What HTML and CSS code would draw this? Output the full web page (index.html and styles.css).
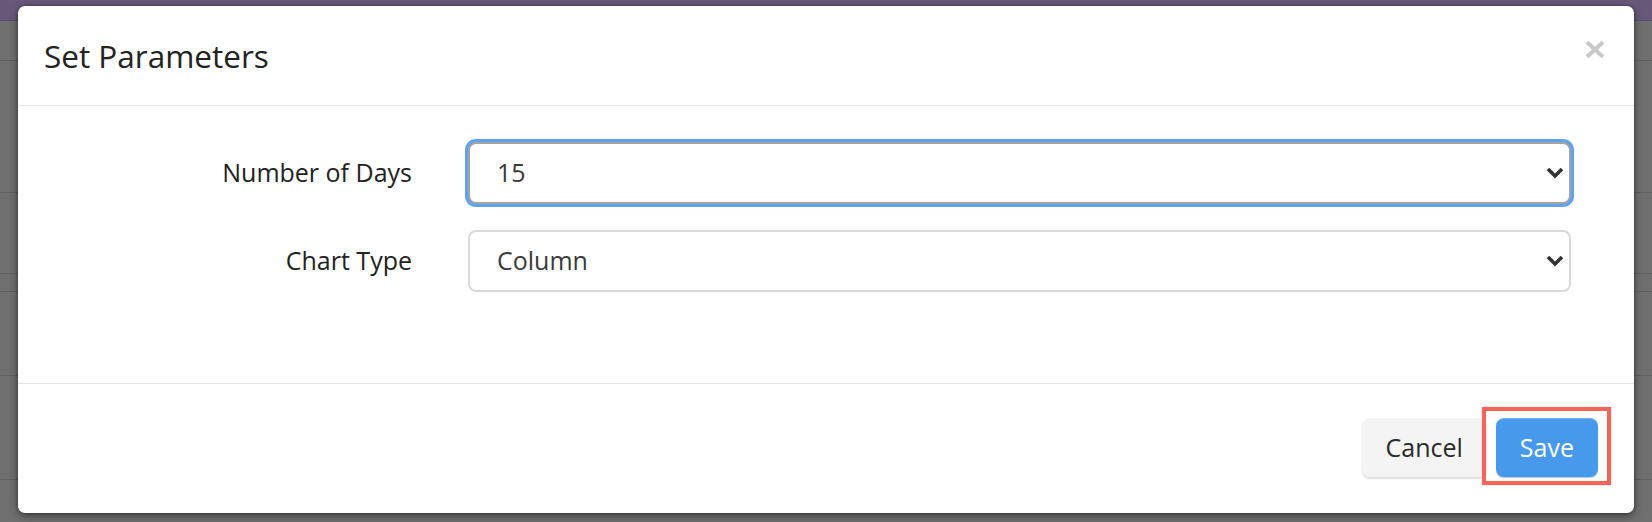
FILE: index.html
```html
<!DOCTYPE html>
<html lang="en">
<head>
<meta charset="utf-8">
<title>Set Parameters</title>
<link rel="stylesheet" href="styles.css">
</head>
<body>
<div class="page">
  <div class="topbar"></div>
  <div class="band b1"></div>
  <div class="band b2"></div>
  <div class="band b3"></div>
  <div class="band b4"></div>
  <div class="band b5"></div>
  <div class="band b6"></div>
</div>

<div class="modal">
  <div class="modal-header">
    <h4 class="modal-title">Set Parameters</h4>
    <button class="close" type="button" aria-label="Close">
      <svg width="18" height="17" viewBox="0 0 18 17"><path d="M2.5 2.5 L15.5 14.5 M15.5 2.5 L2.5 14.5" stroke="#c9c9c9" stroke-width="4" stroke-linecap="square" fill="none"/></svg>
    </button>
  </div>
  <div class="modal-body">
    <div class="form-row">
      <label class="form-label" for="days">Number of Days</label>
      <div class="select-wrap">
        <select id="days" class="form-select focused"><option>15</option></select>
        <svg class="chevron" width="18" height="12" viewBox="0 0 18 12"><path d="M2 2 L9 9 L16 2" stroke="#333" stroke-width="3.6" fill="none"/></svg>
      </div>
    </div>
    <div class="form-row">
      <label class="form-label" for="chart">Chart Type</label>
      <div class="select-wrap">
        <select id="chart" class="form-select"><option>Column</option></select>
        <svg class="chevron" width="18" height="12" viewBox="0 0 18 12"><path d="M2 2 L9 9 L16 2" stroke="#333" stroke-width="3.6" fill="none"/></svg>
      </div>
    </div>
  </div>
  <div class="modal-footer">
    <button class="btn btn-default" type="button">Cancel</button>
    <div class="save-wrap">
      <button class="btn btn-primary" type="button">Save</button>
      <span class="highlight"></span>
    </div>
  </div>
</div>
</body>
</html>
```

FILE: styles.css
```css
* { box-sizing: border-box; }

html, body {
  margin: 0;
  padding: 0;
}

body {
  width: 1652px;
  height: 522px;
  overflow: hidden;
  position: relative;
  background: #6f6f6f;
  font-family: "Open Sans", "Liberation Sans", sans-serif;
}

/* backdrop page */
.page {
  display: flex;
  flex-direction: column;
}
.topbar {
  height: 21px;
  background: #675879;
  border-bottom: 1px solid #5a4c6b;
}
.band {
  border-bottom: 1px solid #606060;
}
.b1 { height: 40px; }
.b2 { height: 132px; }
.b3 { height: 81px; }
.b4 { height: 18px; }
.b5 { height: 84px; }
.b6 { height: 104px; }

/* modal */
.modal {
  position: absolute;
  left: 18px;
  top: 6px;
  width: 1616px;
  height: 507px;
  background: #fff;
  border-radius: 7px;
  box-shadow: 0 3px 9px rgba(0, 0, 0, 0.45), 0 0 3px rgba(0, 0, 0, 0.35);
  display: flex;
  flex-direction: column;
}

.modal-header {
  display: flex;
  justify-content: space-between;
  align-items: flex-start;
  padding: 28px 30px 28px 26px;
  border-bottom: 1px solid #e5e5e5;
}

.modal-title {
  margin: 0;
  font-size: 31.5px;
  line-height: 43px;
  font-weight: 400;
  color: #222;
}

.close {
  margin-top: 7px;
  padding: 0;
  border: 0;
  background: transparent;
  width: 18px;
  height: 17px;
  display: block;
}
.close svg { display: block; }

.modal-body {
  flex: 1;
  padding: 36px 63px 0 0;
  display: flex;
  flex-direction: column;
  gap: 26px;
}

.form-row {
  display: grid;
  grid-template-columns: 394px 1fr;
  column-gap: 56px;
  align-items: center;
}

.form-label {
  text-align: right;
  font-size: 25px;
  line-height: 30px;
  padding-bottom: 3px;
  color: #222;
}

.select-wrap {
  position: relative;
}

.form-select {
  display: block;
  width: 100%;
  height: 62px;
  -webkit-appearance: none;
  appearance: none;
  background: #fff;
  border: 2px solid #dadada;
  border-radius: 8px;
  padding: 0 40px 3px 27px;
  font-family: "Open Sans", "Liberation Sans", sans-serif;
  font-size: 25px;
  color: #3a3a3a;
  outline: none;
}

.form-select.focused {
  border-color: #a4a4a4;
  box-shadow: 0 0 0 3px #5ea2f2;
}

.chevron {
  position: absolute;
  right: 7px;
  top: 25px;
  pointer-events: none;
}

.modal-footer {
  border-top: 1px solid #e5e5e5;
  padding: 34px 36px 36px;
  display: flex;
  justify-content: flex-end;
  gap: 9px;
}

.btn {
  height: 59px;
  padding: 0 24px;
  border: 0;
  border-radius: 8px;
  font-family: "Open Sans", "Liberation Sans", sans-serif;
  font-size: 25px;
  line-height: 57px;
}

.btn-default {
  background: #f4f4f4;
  color: #2a2a2a;
  box-shadow: 0 2px 2px rgba(0, 0, 0, 0.13);
}

.btn-primary {
  background: #4799ec;
  color: #fff;
  box-shadow: inset 0 1px 0 rgba(255, 255, 255, 0.25), 0 1px 1px rgba(30, 90, 160, 0.35);
}

.save-wrap {
  position: relative;
}

.highlight {
  position: absolute;
  left: -14px;
  top: -11px;
  width: 129px;
  height: 78px;
  border: 4px solid #f5645a;
  box-shadow: 0 0 1px rgba(245, 100, 90, 0.6);
  pointer-events: none;
}
```
